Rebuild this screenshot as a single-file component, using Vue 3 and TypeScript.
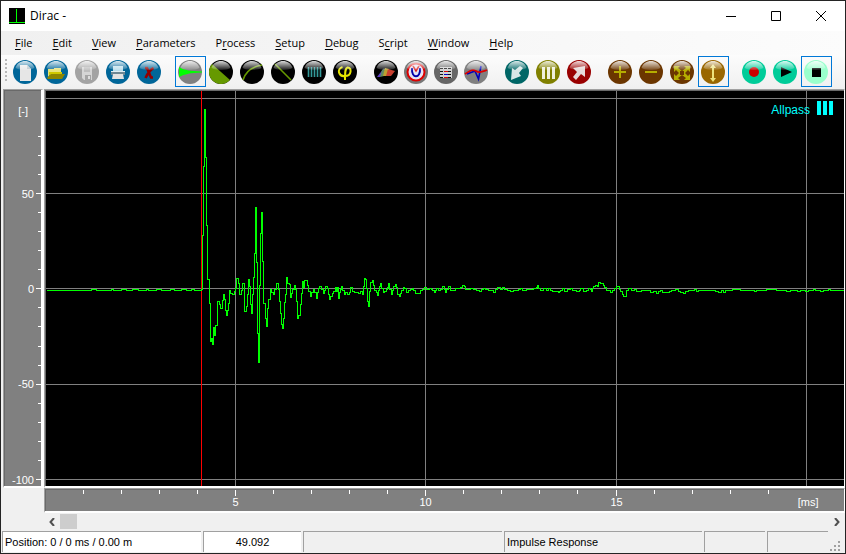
<script setup lang="ts">
interface Shape {
  tag: string
  a: Record<string, string | number>
}
interface Tool {
  label: string
  base: string
  active?: boolean
  shapes: Shape[]
}

const p = (d: string, fill: string): Shape => ({ tag: 'path', a: { d, fill } })
const s = (d: string, stroke: string, w = 1.5): Shape => ({
  tag: 'path',
  a: { d, stroke, fill: 'none', 'stroke-width': w },
})

const menus: [string, string, string][] = [
  ['', 'F', 'ile'],
  ['', 'E', 'dit'],
  ['', 'V', 'iew'],
  ['', 'P', 'arameters'],
  ['P', 'r', 'ocess'],
  ['', 'S', 'etup'],
  ['', 'D', 'ebug'],
  ['S', 'c', 'ript'],
  ['', 'W', 'indow'],
  ['', 'H', 'elp'],
]

const blue = '#006699'
const brown = '#6b3600'
const green = '#00cc99'

const groups: { compact?: boolean; tools: Tool[] }[] = [
  {
    tools: [
      { label: 'New', base: blue, shapes: [p('M7 5h7l4 4v12H7z', '#e6e6e6'), p('M14 5v4h4z', '#b9c4ca')] },
      {
        label: 'Open',
        base: blue,
        shapes: [p('M4 9h6v-1h7v4H8l-4 5z', '#e8e37a'), p('M5 12h13v3H5z', '#cfc800'), p('M3 18l4-4h14l-3 5H4z', '#8d8600')],
      },
      {
        label: 'Save',
        base: '#a3a3a3',
        shapes: [p('M7 7h10v13H9l-2-2z', '#d5d5d5'), p('M9 7h6v5H9z', '#bdbdbd'), p('M10 15h6v5h-6z', '#a5a5a5'), p('M13 16h2v3h-2z', '#dedede')],
      },
      {
        label: 'Print',
        base: blue,
        shapes: [p('M7 6h10v5H7z', '#b9ddeb'), p('M5 11h14v4H5z', '#6c8794'), p('M5 11h14v1H5z', '#dfeef4'), p('M7 14h10l1 5H6z', '#e2e2e2')],
      },
      { label: 'Close', base: blue, shapes: [s('M8 8h2l4 9.500H16M16.500 8c-2 1-5.500 5-8 10', '#900000', 2.6)] },
    ],
  },
  {
    tools: [
      {
        label: 'Impulse response',
        base: '#808080',
        active: true,
        shapes: [p('M1 7C6 10 11 11 24 11.500V12.500C12 13 7 14 1 17z', '#00ff00')],
      },
      { label: 'Decay area', base: '#000000', shapes: [p('M3 4L21 20A12 12 0 0 1 3 4z', '#669900')] },
      { label: 'Growth curve', base: '#000000', shapes: [s('M3 20C5 13 10 7 22 5', '#669900', 1.6)] },
      { label: 'Decay line', base: '#000000', shapes: [s('M4 4L20 20', '#669900', 1.6)] },
      { label: 'Spectrum', base: '#000000', shapes: [s('M6.500 7v10M9.500 7v10M12.500 7v10M15.500 7v10M18.500 7v10', '#339999', 1.6)] },
      { label: 'Phase', base: '#000000', shapes: [s('M9.500 7C3 9 6 17 12 16C19 16 19 7 14.500 7.500C12.500 8 12 10 12 20', '#e5e500', 2)] },
    ],
  },
  {
    compact: true,
    tools: [
      {
        label: 'Waterfall',
        base: '#000000',
        shapes: [
          p('M3 17L10 8L9 12L6 17z', '#6040c8'),
          p('M8 10L12 8L10 16L6 17z', '#608c60'),
          p('M11 8L15 9L14 16L9 16z', '#bca030'),
          p('M14 9L21 11L17 16L12 16z', '#c84030'),
        ],
      },
      {
        label: 'Polar',
        base: '#777777',
        shapes: [
          { tag: 'circle', a: { cx: 12, cy: 12, r: 8.5, fill: '#e4e4f4', stroke: '#dd0000', 'stroke-width': 2 } },
          s('M8 8C7 19 17 19 16 8', '#0000aa', 1.8),
          s('M9 6l3 5l3-5', '#dd2020', 1.6),
        ],
      },
      {
        label: 'Table',
        base: '#666666',
        shapes: [
          p('M6 7h12v11H6z', '#d0d0d0'),
          { tag: 'path', a: { d: 'M6 8.500h12M6 11.500h12M6 14.500h12M6 17.500h12', stroke: '#111111', 'stroke-width': 1, 'stroke-dasharray': '3 1' } },
          s('M10 11.500h4M10 17.500h4', '#dd0000', 1),
          s('M10 14.500h4', '#0000cc', 1),
        ],
      },
      { label: 'Compare', base: '#808080', shapes: [s('M3 14L11 11L14.500 19L17 6', '#0000bb', 1.6), s('M1 14C7 10 9 9 12 11S17 12 23 10', '#dd0000', 1.8)] },
    ],
  },
  {
    tools: [
      { label: 'Pull', base: '#006666', shapes: [p('M6 20L7 8L10 10L15 6L18 8L14 13L16 16z', '#d8e6e6')] },
      { label: 'Levels', base: '#808000', shapes: [p('M6 7h3v12H6zM11 7h3v12h-3zM16 7h3v12h-3z', '#f0f0dc')] },
      { label: 'Push', base: '#990000', shapes: [p('M18 6L18 17L14 14L9 20L6 17L10 12L6 8z', '#e6d8d8')] },
    ],
  },
  {
    tools: [
      { label: 'Zoom in', base: brown, shapes: [p('M11 6h2v5h5v2h-5v5h-2v-5H6v-2h5z', '#b5ad00')] },
      { label: 'Zoom out', base: brown, shapes: [p('M6 11h12v2H6z', '#b5ad00')] },
      {
        label: 'Zoom all',
        base: brown,
        shapes: [
          p('M4 6h6L8 8l4 3l4-3l-2-2h6v6l-2-2l-3 3l3 3l2-2v6h-6l2-2l-4-3l-4 3l2 2H4v-6l2 2l3-3l-3-3l-2 2z', '#b5ad00'),
          p('M10 11h4v4h-4z', '#6b3600'),
        ],
      },
      {
        label: 'Fit height',
        base: '#996600',
        active: true,
        shapes: [p('M12 4L15 8h-2v10h2L12 22L9 18h2V8H9z', '#ece27c')],
      },
    ],
  },
  {
    tools: [
      { label: 'Record', base: green, shapes: [{ tag: 'circle', a: { cx: 12, cy: 12, r: 5, fill: '#cc0000' } }] },
      { label: 'Play', base: green, shapes: [p('M8 7L19 12L8 17z', '#000000')] },
      { label: 'Stop', base: '#99ffcc', active: true, shapes: [p('M8 8h9v9H8z', '#000000')] },
    ],
  },
]

/* Plot area in user units; the grid is placed on these. */
const W = 798
const H = 395
const msStep = 190.35 / 5
const percent = (v: number, full: number) => `${(v / full) * 100}%`

const gridX = [5, 10, 15, 20].map((t) => Math.floor(t * msStep - 1))
const gridY = [7.5, 102.5, 197.5, 293.5, 388.5]

const xTicks = Array.from({ length: 19 }, (_, i) => i + 1).map((t) => ({
  t,
  pos: percent(Math.floor(t * msStep - 1) + 0.5, W),
  major: t % 5 === 0,
}))
const yTicks = Array.from({ length: 19 }, (_, i) => 80 - i * 10).map((v) => ({
  v,
  pos: percent(Math.round(197.3 - v * 1.907) + 0.5, H),
  major: v % 50 === 0,
}))

/* Recorded blocks: origin of the block, then x,y samples in thirds of a unit. */
const blocks: { x: number; y: number; data: string }[] = [
  {
    x: 0,
    y: 199,
    data: '0,0 135,-1 150,0 195,-2 201,0 225,-2 240,0 258,-2 276,0 300,-3 306,0 330,-2 345,0 372,-3 384,0 405,-2 420,0',
  },
  {
    x: 144,
    y: -3,
    data: '0,606 4,603 12,606 34,605 36,560 38,443 41,235 44,64 47,208 50,412 53,574 57,645 60,760 63,752 66,768 69,765 71,718 74,742 77,712 81,708 83,640 88,648 92,660 96,636 99,618 102,635 105,668 109,682 112,668 114,645 117,607 121,615 128,618 132,610 136,600 140,571 145,585 149,618 154,608 158,586 162,625 164,670 168,655 171,620 174,574 177,595 180,648 183,677 186,620 189,568 192,496 196,358 199,523 202,736 205,823 208,592 211,436 214,373 217,520 220,645 226,690 229,715 232,660 236,633 240,604 244,612 250,618 254,605 260,587 264,605 267,640 270,675 274,708 277,720 280,690 282,643 285,618 288,568 292,585 298,590 300,628 303,615 306,603 312,592 316,605 320,640 323,690 326,682',
  },
  {
    x: 254,
    y: 169,
    data: '0,133 3,100 6,65 10,82 14,60 20,60 22,75 26,95 30,108 34,98 40,88 44,97 48,115 52,98 55,85 59,78 64,88 69,100 73,90 76,78 81,85 84,102 87,118 92,110 97,100 100,95 105,82 109,95 112,82 115,115 118,98 121,88 125,78 128,92 132,104 137,96 141,102 148,98 152,82 156,93 162,97 168,98 176,101 181,95 186,102 190,80 193,55 197,58 199,85 202,125 205,139 208,95 212,68 216,62 219,75 223,90 228,97 232,105 236,92 238,78 242,70 245,85 250,96 254,94 258,88 262,82 266,70 269,88 274,103 277,92 281,80 286,73 290,82 293,102 297,109 300,100 305,90 309,83 314,85 318,96 324,90 330,88 336,84 341,90 346,99 356,99 362,92 368,88 374,82 380,88 388,86 394,88 398,92 402,98 406,90 410,84 416,92 422,88 428,80 432,88 436,96 440,88 446,80 452,91 460,91 466,86 474,84 480,82 486,77 492,80 496,88 506,89 512,85 520,88 530,92 538,94 544,88 550,86 556,89 564,91 574,91 580,96 586,89 592,83 600,87 606,83 612,88 622,92 630,94 640,91 646,92 654,88 660,86 668,91 680,89 690,88 700,86 708,83 712,77 716,86 722,90 730,86 738,90 744,86 752,90 758,94 768,95 774,98 778,94',
  },
  {
    x: 514,
    y: 169,
    data: '0,91 6,86 12,94 22,88 30,85 38,91 50,94 58,91 62,86 70,93 78,91 84,86 90,88 94,95 98,86 101,79 106,76 112,79 116,67 122,70 130,76 134,82 138,90 144,91 152,97 156,90 162,84 168,80 174,80 178,88 182,94 186,103 190,109 196,108 200,90 206,86 214,90 222,88 228,94 238,94 244,91 256,92 270,96 280,93 288,99 294,94 302,92 306,96 318,97 328,95 334,91 346,88 354,93 360,96 370,100 376,95 386,92 396,92 402,89 408,94 416,91 426,92 436,90 446,92 456,90 466,93 476,97 484,91 490,96 496,90 506,91 516,87 530,88 540,91 550,92 562,91 574,92 582,94 590,92 606,91 620,88 640,88 650,92 660,90 668,92 680,94 690,91 700,92 712,94 722,92 736,93 746,90 752,92 760,88 766,92 774,91 782,94 790,91 800,92 804,88 810,92 820,91 840,90 852,88',
  },
]

const trace = blocks
  .flatMap((b) =>
    b.data.split(' ').map((pair) => {
      const [x, y] = pair.split(',').map(Number)
      return [b.x + Math.floor(x / 3) + 0.5, b.y + Math.floor(y / 3) + 0.5]
    }),
  )
  .map(([x, y], i) => (i === 0 ? `M${x} ${y}` : `H${x}V${y}`))
  .join('')
</script>

<template>
  <div class="window">
    <header class="titlebar">
      <svg class="logo" viewBox="0 0 16 16" shape-rendering="crispEdges">
        <path d="M0 0h16v16H0z" fill="#000" />
        <path d="M0 14h16v1H0zM7 1h1v13H7z" fill="#00ff00" />
      </svg>
      <h1>Dirac -</h1>
      <div class="caption">
        <button type="button" aria-label="Minimize">
          <svg viewBox="0 0 10 10"><path d="M0 5.5h10" /></svg>
        </button>
        <button type="button" aria-label="Maximize">
          <svg viewBox="0 0 10 10"><path d="M.5.5h9v9h-9z" /></svg>
        </button>
        <button type="button" aria-label="Close window">
          <svg viewBox="0 0 10 10"><path d="M0 0L10 10M10 0L0 10" /></svg>
        </button>
      </div>
    </header>

    <nav class="menubar">
      <button v-for="m in menus" :key="m.join('')" type="button">{{ m[0] }}<u>{{ m[1] }}</u>{{ m[2] }}</button>
    </nav>

    <div class="toolbar" role="toolbar" aria-label="Tools">
      <span class="grip"></span>
      <div v-for="(g, gi) in groups" :key="gi" class="group" :class="{ compact: g.compact }">
        <button
          v-for="t in g.tools"
          :key="t.label"
          type="button"
          class="tool"
          :class="{ active: t.active }"
          :aria-label="t.label"
        >
          <svg viewBox="0 0 24 24">
            <defs>
              <linearGradient id="gloss" x1="0" y1="0" x2="0" y2="1">
                <stop offset="0" stop-color="#fff" stop-opacity=".85" />
                <stop offset="1" stop-color="#fff" stop-opacity=".12" />
              </linearGradient>
            </defs>
            <circle cx="12" cy="12" r="12" :fill="t.base" />
            <component :is="sh.tag" v-for="(sh, i) in t.shapes" :key="i" v-bind="sh.a" />
            <path d="M2.500 8C4 3 8 1 12 1S20 3 21.500 8C18 10.500 6 10.500 2.500 8z" fill="url(#gloss)" />
          </svg>
        </button>
      </div>
    </div>

    <main class="workspace">
      <div class="ruler-y sunken">
        <svg>
          <template v-for="k in yTicks" :key="k.v">
            <line class="tick" :x1="k.major ? '87%' : '92%'" x2="100%" :y1="k.pos" :y2="k.pos" />
            <text v-if="k.major" x="29" :y="k.pos" dy="4" text-anchor="end">{{ k.v }}</text>
          </template>
          <text x="23" y="24" text-anchor="end">[-]</text>
        </svg>
      </div>

      <div class="plot sunken">
        <svg :viewBox="`0 0 ${W} ${H}`" preserveAspectRatio="none" shape-rendering="crispEdges">
          <line v-for="y in gridY" :key="y" class="grid" x1="0" :x2="W" :y1="y" :y2="y" />
          <line v-for="x in gridX" :key="x" class="grid" :x1="x + 0.5" :x2="x + 0.5" y1="0" :y2="H" />
          <line class="cursor" x1="155.5" x2="155.5" y1="0" :y2="H" />
          <path class="trace" :d="trace" />
        </svg>
        <div class="legend"><span>Allpass</span><i></i><i></i><i></i></div>
      </div>

      <div class="ruler-x sunken">
        <svg>
          <template v-for="k in xTicks" :key="k.t">
            <line class="tick" :x1="k.pos" :x2="k.pos" y1="0" :y2="k.major ? 6 : 4" />
            <text v-if="k.major" :x="k.pos" y="16" text-anchor="middle">{{ k.t }}</text>
          </template>
          <text x="95.5%" y="16" text-anchor="middle">[ms]</text>
        </svg>
      </div>

      <div class="scrollbar">
        <button type="button" aria-label="Scroll left">
          <svg viewBox="0 0 6 8"><path d="M5 0L1.500 4L5 8" /></svg>
        </button>
        <div class="track"><div class="thumb"></div></div>
        <button type="button" aria-label="Scroll right">
          <svg viewBox="0 0 6 8"><path d="M1 0L4.500 4L1 8" /></svg>
        </button>
      </div>
    </main>

    <footer class="statusbar">
      <div class="cell light">Position: 0 / 0 ms / 0.00 m</div>
      <div class="cell light center">49.092</div>
      <div class="cell"></div>
      <div class="cell">Impulse Response</div>
      <div class="cell"></div>
      <div class="cell"></div>
      <svg class="resize" viewBox="0 0 11 11" shape-rendering="crispEdges">
        <path d="M8 0h2v2H8zM4 4h2v2H4zM8 4h2v2H8zM0 8h2v2H0zM4 8h2v2H4zM8 8h2v2H8z" fill="#a0a0a0" />
      </svg>
    </footer>
  </div>
</template>

<style>
body {
  margin: 0;
  background: #f0f0f0;
}
</style>

<style scoped>
.window {
  box-sizing: border-box;
  display: flex;
  flex-direction: column;
  min-height: 100vh;
  border: 1px solid #242424;
  background: #f0f0f0;
  color: #000;
  font: 12px/16px 'Open Sans', 'Noto Sans', sans-serif;
}
button {
  padding: 0;
  border: 0;
  background: none;
  color: inherit;
  font: inherit;
}
svg {
  display: block;
}
.titlebar {
  display: flex;
  align-items: center;
  height: 30px;
  padding: 0 2px 0 8px;
  background: #fff;
}
.logo {
  width: 16px;
  height: 16px;
}
h1 {
  flex: 1;
  margin: 0 0 0 5px;
  font-size: 12px;
  font-weight: 400;
}
.caption {
  display: flex;
}
.caption button {
  display: grid;
  place-items: center;
  width: 45px;
  height: 30px;
}
.caption svg {
  width: 10px;
  height: 10px;
  fill: none;
  stroke: #000;
  stroke-width: 1;
}
.menubar {
  display: flex;
  height: 24px;
  padding-left: 4px;
  background: linear-gradient(90deg, #f0f0f0, #fcfcfc);
  font-size: 11px;
}
.menubar button {
  padding: 0 10px;
}
.menubar u {
  text-underline-offset: 2px;
}
.toolbar {
  box-sizing: border-box;
  display: flex;
  align-items: flex-start;
  gap: 10px;
  height: 33px;
  padding: 1px 0 0 4px;
  background: linear-gradient(#fcfcfc, #f0f0f0);
}
.grip {
  width: 2px;
  height: 24px;
  margin: 3px -7px 0 0;
  background: repeating-linear-gradient(#b8b8b8 0 2px, transparent 2px 4px);
}
.group {
  display: flex;
}
.tool {
  box-sizing: border-box;
  width: 31px;
  height: 31px;
  padding: 2px;
  border: 1px solid transparent;
}
.compact .tool:not(:last-child) {
  width: 30px;
}
.tool.active {
  border-color: #0078d7;
}
.tool svg {
  width: 24px;
  height: 24px;
}
.workspace {
  flex: 1;
  display: grid;
  grid-template-columns: 41px minmax(0, 1fr);
  grid-template-rows: minmax(0, 1fr) 25px 17px;
  padding: 1px 0 0 2px;
}
.sunken {
  box-sizing: border-box;
  min-width: 0;
  min-height: 0;
  padding: 1px 0 0 1px;
  border-style: solid;
  border-width: 1px 1px 2px 1px;
  border-color: #a0a0a0 #fff #fff #a0a0a0;
  box-shadow: inset 1px 1px #696969;
}
.ruler-y,
.ruler-x {
  background: #808080;
}
.ruler-y {
  border-right-width: 3px;
}
.sunken > svg {
  width: 100%;
  height: 100%;
}
.ruler-x,
.scrollbar {
  grid-column: 2;
}
.tick {
  stroke: #fff;
  shape-rendering: crispEdges;
}
.workspace text {
  fill: #fff;
  font: 11px 'Liberation Sans', Arial, sans-serif;
}
.plot {
  position: relative;
  background: #000;
}
.grid {
  stroke: #808080;
}
.cursor {
  stroke: #f00;
}
.trace {
  fill: none;
  stroke: #0f0;
  stroke-width: 1;
}
.legend {
  position: absolute;
  top: 11px;
  right: 11px;
  display: flex;
  gap: 2px;
  color: #0ff;
  font: 12px/18px 'Liberation Sans', Arial, sans-serif;
}
.legend span {
  margin-right: 5px;
}
.legend i {
  width: 4px;
  height: 14px;
  background: #0ff;
}
.scrollbar {
  display: flex;
}
.scrollbar button {
  display: grid;
  place-items: center;
  width: 16px;
}
.scrollbar button svg {
  width: 6px;
  height: 8px;
  fill: none;
  stroke: #505050;
  stroke-width: 2;
}
.track {
  flex: 1;
  padding: 1px 0;
}
.thumb {
  width: 17px;
  height: 15px;
  background: #cdcdcd;
}
.statusbar {
  display: grid;
  grid-template-columns: 199fr 98fr 199fr 198fr 61fr 61fr 13px;
  gap: 2px;
  height: 21px;
  padding: 1px 2px 1px 1px;
  font: 11px/20px 'Liberation Sans', Arial, sans-serif;
}
.cell {
  padding-left: 2px;
  border-top: 1px solid #a0a0a0;
  border-left: 1px solid #a0a0a0;
}
.light {
  background: #fff;
}
.center {
  padding: 0;
  text-align: center;
}
.resize {
  align-self: end;
  width: 11px;
  height: 11px;
}
</style>
